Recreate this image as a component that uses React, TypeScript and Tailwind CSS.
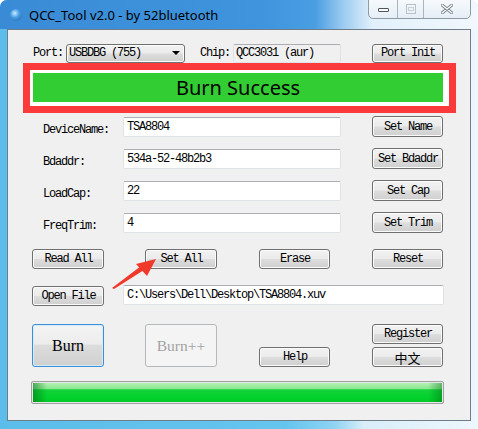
import React from "react";

const mono = "font-['Liberation_Mono',monospace] text-[12px] tracking-[-1.2px] text-black leading-none";
const btnBase =
  "flex items-center justify-center rounded-[3px] border border-[#707070] bg-[linear-gradient(180deg,#f2f2f2_0%,#ebebeb_48%,#dddddd_52%,#cfcfcf_100%)] shadow-[inset_0_0_0_1px_#fbfbfb]";

function Btn({ cls, children }: { cls: string; children: React.ReactNode }) {
  return (
    <div className={`${btnBase} ${cls}`}>
      <span className={`${mono} pl-[1px]`}>{children}</span>
    </div>
  );
}

function Edit({ cls, children }: { cls: string; children: React.ReactNode }) {
  return (
    <div
      className={`flex items-center rounded-[2px] border border-[#dfe3e8] border-t-[#abadb3] bg-white pl-[3px] ${cls}`}
    >
      <span className={mono}>{children}</span>
    </div>
  );
}

function Row({ label, value, btn }: { label: string; value: string; btn: string }) {
  return (
    <div className="flex h-[21px] items-center">
      <div className="ml-[35px] w-[80px]">
        <span className={mono}>{label}</span>
      </div>
      <Edit cls="w-[218px] h-[20px]">{value}</Edit>
      <Btn cls="ml-[31px] w-[71px] h-[21px]">{btn}</Btn>
    </div>
  );
}

export default function App() {
  return (
    <div className="relative h-[429px] w-[478px] overflow-hidden rounded-t-[7px] bg-[linear-gradient(90deg,#5dbdea_0%,#66c5ef_60%,#8fd3f3_70%,#d8eef9_76%,#eef7fc_100%)]">
      {/* title bar */}
      <div className="relative flex h-[29px] items-center bg-[linear-gradient(90deg,#3a8bd6_0%,#3f94dd_55%,#4a9ee2_66%,#9fcdf1_72%,#e2f0fb_78%,#f2f8fd_100%)]">
        <div className="ml-[10px] mt-[1px] h-[12px] w-[12px] rounded-full bg-[radial-gradient(circle_at_40%_35%,#cfe9ff_0%,#4aa0e6_40%,#1d5d9e_100%)]" />
        <span className="ml-[7px] mt-[1px] font-['Noto_Sans',sans-serif] text-[13px] leading-none text-black">
          QCC_Tool v2.0 - by 52bluetooth
        </span>
        <div className="absolute right-[7px] top-[-1px] flex h-[20px] w-[103px] overflow-hidden rounded-b-[5px] border border-[#8e9aa6] bg-[linear-gradient(180deg,#f6f9fc_0%,#e6eef6_100%)]">
          <div className="flex w-[29px] items-center justify-center border-r border-[#a8b4c0]">
            <div className="mt-[2px] h-[4px] w-[11px] rounded-[1px] border border-[#4c5560] bg-white" />
          </div>
          <div className="flex w-[26px] items-center justify-center border-r border-[#a8b4c0]">
            <div className="flex h-[10px] w-[10px] items-center justify-center border border-[#b9c2cb]">
              <div className="h-[4px] w-[6px] border border-[#c8d0d8]" />
            </div>
          </div>
          <div className="flex flex-1 items-center justify-center">
            <svg width="12" height="10" viewBox="0 0 12 10">
              <path d="M1 1 L11 9 M11 1 L1 9" stroke="#7a838c" strokeWidth="3" strokeLinecap="round" />
              <path d="M1 1 L11 9 M11 1 L1 9" stroke="#ffffff" strokeWidth="1.2" strokeLinecap="round" />
            </svg>
          </div>
        </div>
      </div>

      {/* client area */}
      <div className="ml-[7px] flex h-[392px] w-[464px] flex-col border border-[#6f7d8b] bg-[#f0f0f0]">
        {/* port row */}
        <div className="mt-[13px] flex h-[20px] items-center">
          <span className={`${mono} ml-[25px] w-[33px]`}>Port:</span>
          <div className="flex h-[19px] w-[119px] items-center justify-between rounded-[3px] border border-[#707070] bg-[linear-gradient(180deg,#f2f2f2_0%,#ebebeb_48%,#dddddd_52%,#cfcfcf_100%)] pl-[2px] pr-[4px] shadow-[inset_0_0_0_1px_#fbfbfb]">
            <span className={mono}>USBDBG (755)</span>
            <svg width="8" height="4" viewBox="0 0 8 4">
              <path d="M0 0 L8 0 L4 4 Z" fill="#000" />
            </svg>
          </div>
          <span className={`${mono} ml-[15px] w-[33px]`}>Chip:</span>
          <div className="flex h-[19px] w-[108px] items-center rounded-[2px] border border-[#dfe3e8] border-t-[#abadb3] bg-[#f0f0f0] pl-[2px]">
            <span className={mono}>QCC3031 (aur)</span>
          </div>
          <Btn cls="ml-[31px] w-[71px] h-[19px]">Port Init</Btn>
        </div>

        {/* status (red annotation box) */}
        <div className="ml-[15px] flex h-[50px] w-[433px] border-[7px] border-[#fb3b3b] bg-white pb-[4px] pl-[3px] pr-[6px] pt-[3px]">
          <div className="flex flex-1 items-center justify-center bg-[#32cd32]">
            <span className="font-['Noto_Sans',sans-serif] text-[20px] leading-none text-black">Burn Success</span>
          </div>
        </div>

        {/* fields */}
        <div className="mt-[3px] flex flex-col gap-[11px]">
          <Row label="DeviceName:" value="TSA8804" btn="Set Name" />
          <Row label="Bdaddr:" value="534a-52-48b2b3" btn="Set Bdaddr" />
          <Row label="LoadCap:" value="22" btn="Set Cap" />
          <Row label="FreqTrim:" value="4" btn="Set Trim" />
        </div>

        {/* action buttons */}
        <div className="mt-[16px] flex h-[20px]">
          <Btn cls="ml-[24px] w-[72px] h-[20px]">Read All</Btn>
          <Btn cls="ml-[41px] w-[72px] h-[20px]">Set All</Btn>
          <Btn cls="ml-[42px] w-[71px] h-[20px]">Erase</Btn>
          <Btn cls="ml-[42px] w-[71px] h-[20px]">Reset</Btn>
        </div>

        {/* file row */}
        <div className="mt-[16px] flex h-[21px] items-center">
          <Btn cls="ml-[24px] mt-[1px] w-[72px] h-[20px]">Open File</Btn>
          <Edit cls="ml-[19px] mb-[1px] w-[321px] h-[20px]">C:\Users\Dell\Desktop\TSA8804.xuv</Edit>
        </div>

        {/* burn row */}
        <div className="mt-[18px] flex h-[43px]">
          <div className="ml-[24px] flex h-[43px] w-[72px] items-center justify-center rounded-[3px] border border-[#3c8fd6] bg-[linear-gradient(180deg,#f4f4f4_0%,#ececec_46%,#dcdcdc_50%,#d0d0d0_100%)] shadow-[inset_0_0_0_1px_#d6ecfa]">
            <span className="font-['Liberation_Serif',serif] text-[16px] leading-none text-black">Burn</span>
          </div>
          <div className="ml-[41px] flex h-[43px] w-[72px] items-center justify-center rounded-[3px] border border-[#b4b8bb] bg-[#f4f4f4]">
            <span className="font-['Liberation_Serif',serif] text-[15.5px] leading-none text-[#a3a3a3]">Burn++</span>
          </div>
          <Btn cls="ml-[42px] mt-[23px] w-[71px] h-[20px]">Help</Btn>
          <div className="ml-[42px] flex flex-col gap-[3px]">
            <Btn cls="w-[71px] h-[20px]">Register</Btn>
            <div className={`${btnBase} h-[20px] w-[71px]`}>
              <span className="font-['Noto_Sans_CJK_SC',sans-serif] text-[13px] leading-none text-black">中文</span>
            </div>
          </div>
        </div>

        {/* progress bar */}
        <div className="ml-[23px] mt-[14px] h-[23px] w-[413px] rounded-[2px] border border-[#a0a0a0] bg-[#e6e6e6] p-[1px]">
          <div className="relative h-full w-full bg-[linear-gradient(180deg,#b5f0b5_0%,#8ae68d_30%,#12d33a_36%,#00d22a_80%,#06c72a_100%)]">
            <div className="absolute inset-0 bg-[linear-gradient(90deg,rgba(0,110,20,0.55)_0px,rgba(0,110,20,0)_14px,rgba(0,110,20,0)_calc(100%-14px),rgba(0,110,20,0.45)_100%)]" />
          </div>
        </div>
      </div>

      {/* red arrow annotation */}
      <svg className="pointer-events-none absolute left-0 top-0" width="478" height="429" viewBox="0 0 478 429">
        <polygon points="112,288 114,289 144,270 141,266" fill="#f0392b" />
        <polygon points="156,259 136,264 147,276" fill="#f0392b" />
      </svg>
    </div>
  );
}
